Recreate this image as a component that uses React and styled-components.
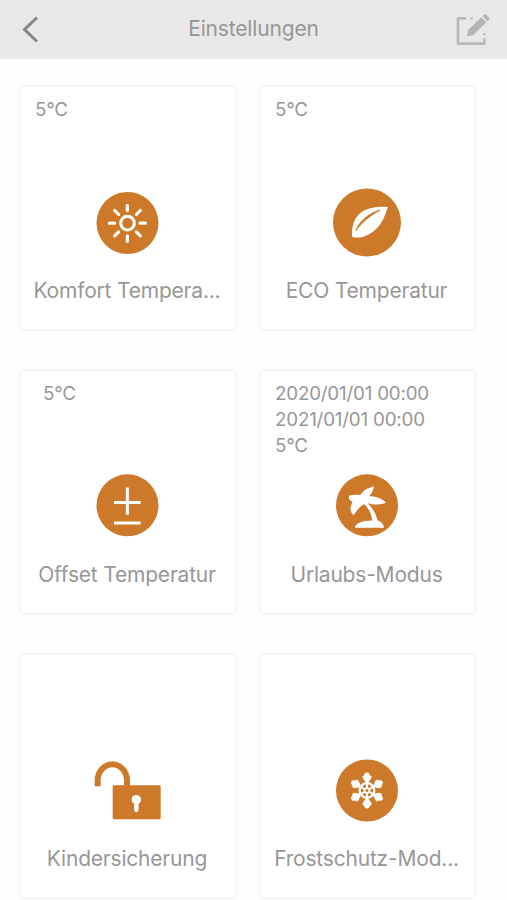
import styled, { createGlobalStyle } from "styled-components";

const ORANGE = "#cd792a";

function SunIcon() {
  return (
    <Icon viewBox="18 1.5 252 252">
      <circle cx="142.5" cy="127.5" r="93" fill={ORANGE} />
      <circle cx="142.5" cy="128" r="20.5" fill="none" stroke="#fff" strokeWidth="9" />
      <path
        d="M142 75v15M142 166v16M88 128h16M180 128h16M104 90l12 12M169 154l12 12M181 90l-12 12M116 154l-12 12"
        stroke="#fff"
        strokeWidth="9.5"
        strokeLinecap="round"
      />
    </Icon>
  );
}

function LeafIcon() {
  return (
    <Icon viewBox="12 3 252 252">
      <circle cx="135" cy="127.5" r="102" fill={ORANGE} />
      <path d="M198 81C170 79 140 82 118 97C98 111 87 140 91 171C113 177 139 168 160 149C184 128 189 103 198 81Z" fill="#fff" />
      <path d="M102 152C110 127 137 101 174 90C146 106 118 127 102 152Z" fill={ORANGE} stroke={ORANGE} strokeWidth="3" strokeLinejoin="round" />
    </Icon>
  );
}

function OffsetIcon() {
  return (
    <Icon viewBox="18 -1.5 252 252">
      <circle cx="142.5" cy="119.5" r="93" fill={ORANGE} />
      <path d="M142 66v82M102 111h80M102 172.500h80" stroke="#fff" strokeWidth="9" />
    </Icon>
  );
}

function PalmIcon() {
  return (
    <Icon viewBox="12 -1.500 252 252">
      <circle cx="135" cy="119.5" r="93" fill={ORANGE} />
      <path
        d="M116 88C121 76 135 68 156 62C153 75 149 84 141 92C160 91 180 98 193 112C173 119 153 118 137 113C153 129 163 148 167 165C178 168 185 176 186 187H98C102 174 117 165 151 165C148 145 140 128 127 116C115 119 108 132 94 149C83 138 83 123 92 110L81 101V90C95 87 106 87 116 88Z"
        fill="#fff"
      />
    </Icon>
  );
}

function LockIcon() {
  return (
    <Icon viewBox="18 -3 252 252">
      <path d="M53 109V92A44 49 0 0 1 141 92V112" fill="none" stroke={ORANGE} strokeWidth="18" />
      <rect x="98" y="106" width="144" height="102" rx="4" fill={ORANGE} />
      <circle cx="169" cy="149" r="14" fill="#fff" />
      <path d="M169 154v26" stroke="#fff" strokeWidth="13" strokeLinecap="round" />
    </Icon>
  );
}

function SnowIcon() {
  return (
    <Icon viewBox="12 -4.5 252 252">
      <circle cx="135" cy="120" r="93" fill={ORANGE} />
      {[0, 60, 120, 180, 240, 300].map((angle) => (
        <g key={angle} transform={`rotate(${angle} 135 120)`}>
          <path d="M135 120V76" stroke="#fff" strokeWidth="6" />
          <path d="M135 66C141 66 143 71 144 75L149 77L147 85L138 96H132L123 85L121 77L126 75C127 71 129 66 135 66Z" fill="#fff" />
        </g>
      ))}
      <circle cx="135" cy="120" r="22" fill="none" stroke="#fff" strokeWidth="7" />
      <circle cx="135" cy="120" r="10" fill="#fff" />
      <circle cx="135" cy="120" r="4.5" fill={ORANGE} />
    </Icon>
  );
}

function App() {
  const settings = [
    { label: "Komfort Tempera...", values: ["5°C"], icon: SunIcon },
    { label: "ECO Temperatur", values: ["5°C"], icon: LeafIcon },
    { label: "Offset Temperatur", values: ["5°C"], icon: OffsetIcon, indent: true },
    { label: "Urlaubs-Modus", values: ["2020/01/01 00:00", "2021/01/01 00:00", "5°C"], icon: PalmIcon },
    { label: "Kindersicherung", values: [], icon: LockIcon },
    { label: "Frostschutz-Mod...", values: [], icon: SnowIcon },
  ];

  return (
    <Screen>
      <GlobalStyle />
      <Header>
        <HeaderButton aria-label="Zurück">
          <svg width="20" height="30" viewBox="0 0 20 30">
            <path d="M17 2.500L4.500 14.500L17 26.500" fill="none" stroke="#858585" strokeWidth="3" />
          </svg>
        </HeaderButton>
        <Title>Einstellungen</Title>
        <HeaderButton aria-label="Bearbeiten">
          <svg width="36" height="34" viewBox="0 0 108 102">
            <path d="M34 16H9V92H88V76" fill="none" stroke="#bababa" strokeWidth="8" strokeLinejoin="round" />
            <path d="M46 16h7M88 60v7" stroke="#bababa" strokeWidth="7" />
            <path d="M36 70L40 50L79 13L94 28L55 66Z" fill="#b5b5b5" />
            <path d="M83 9L88 4Q91 2 94 5L103 14Q105 17 102 20L97 25Z" fill="#b5b5b5" />
          </svg>
        </HeaderButton>
      </Header>
      <Grid>
        {settings.map(({ label, values, icon: SettingIcon, indent }) => (
          <Card key={label}>
            <Values $indent={indent}>
              {values.map((value) => <Value key={value}>{value}</Value>)}
            </Values>
            <SettingIcon />
            <Label>{label}</Label>
          </Card>
        ))}
      </Grid>
    </Screen>
  );
}

const GlobalStyle = createGlobalStyle`
  * {
    box-sizing: border-box;
  }

  body {
    margin: 0;
    background: #fefefe;
    overflow: hidden;
  }
`;

const Screen = styled.div`
  height: 900px;
  overflow: hidden;
  color: #979797;
  font-family: Inter, "Liberation Sans", sans-serif;
`;

const Header = styled.header`
  display: grid;
  grid-template-columns: 36px 1fr 36px;
  align-items: center;
  height: 59px;
  padding: 0 16px 0 20px;
  background: #e8e8e8;
`;

const HeaderButton = styled.button`
  display: flex;
  padding: 0;
  border: 0;
  background: none;
`;

const Title = styled.h1`
  margin: 0;
  padding: 0 4px 1px 0;
  font-size: 21px;
  font-weight: 400;
  letter-spacing: -0.15px;
  line-height: 30px;
  text-align: center;
`;

const Grid = styled.main`
  display: grid;
  grid-template-columns: 214px 213px;
  grid-auto-rows: 242px;
  gap: 42px 26px;
  padding: 28px 0 0 21px;
`;

const Card = styled.section`
  display: flex;
  flex-direction: column;
  align-items: center;
  border-radius: 3px;
  background: #fff;
  box-shadow: 0 0 5px rgba(0, 0, 0, 0.1);
`;

const Values = styled.div`
  align-self: stretch;
  height: 94px;
  padding: 10px 0 0 ${(props) => (props.$indent ? 22 : 14)}px;
`;

const Value = styled.div`
  font-size: 18.8px;
  letter-spacing: -0.2px;
  line-height: 26px;
`;

const Icon = styled.svg`
  flex: none;
  width: 84px;
  height: 84px;
`;

const Label = styled.div`
  margin-top: 11px;
  padding-right: 2px;
  font-size: 21px;
  letter-spacing: -0.2px;
  line-height: 30px;
  white-space: nowrap;
`;

export default App;
